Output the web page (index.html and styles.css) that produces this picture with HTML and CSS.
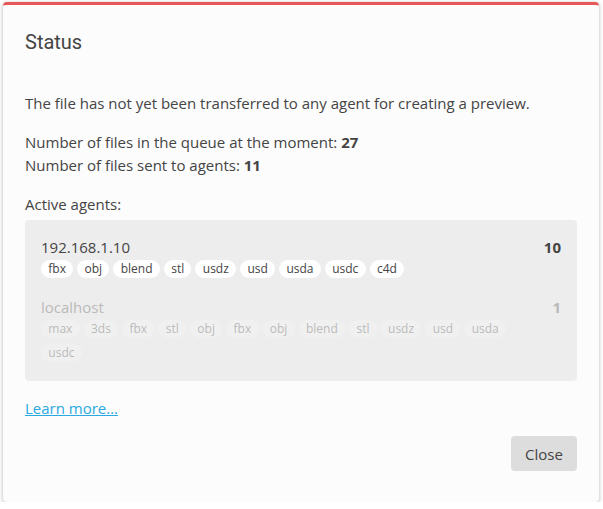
FILE: index.html
```html
<!DOCTYPE html>
<html>
<head>
<meta charset="utf-8">
<link rel="stylesheet" href="styles.css">
</head>
<body>
<div class="dialog">
  <h2 class="title">Status</h2>
  <div class="content">
    <p class="para">The file has not yet been transferred to any agent for creating a preview.</p>
    <p class="para">Number of files in the queue at the moment: <b>27</b><br>Number of files sent to agents: <b>11</b></p>
    <p class="para label">Active agents:</p>
    <div class="agents">
      <div class="agent">
        <div class="agent-main">
          <div class="agent-name">192.168.1.10</div>
          <div class="chips">
            <span class="chip">fbx</span><span class="chip">obj</span><span class="chip">blend</span><span class="chip">stl</span><span class="chip">usdz</span><span class="chip">usd</span><span class="chip">usda</span><span class="chip">usdc</span><span class="chip">c4d</span>
          </div>
        </div>
        <b class="agent-count">10</b>
      </div>
      <div class="agent inactive">
        <div class="agent-main">
          <div class="agent-name">localhost</div>
          <div class="chips">
            <span class="chip">max</span><span class="chip">3ds</span><span class="chip">fbx</span><span class="chip">stl</span><span class="chip">obj</span><span class="chip">fbx</span><span class="chip">obj</span><span class="chip">blend</span><span class="chip">stl</span><span class="chip">usdz</span><span class="chip">usd</span><span class="chip">usda</span><span class="chip">usdc</span>
          </div>
        </div>
        <b class="agent-count">1</b>
      </div>
    </div>
    <p class="learn"><a href="#" class="link">Learn more…</a></p>
  </div>
  <div class="actions"><button class="btn">Close</button></div>
</div>
</body>
</html>
```
FILE: styles.css
```css
html, body { margin: 0; padding: 0; background: #fff; }
body { padding: 2px 4px 0 3px; font-family: "Open Sans", sans-serif; color: #444; }
.dialog {
  width: 596px;
  box-sizing: border-box;
  background: #fcfcfc;
  border-top: 3px solid #e65757;
  border-radius: 4px;
  box-shadow: 0 1px 4px rgba(0,0,0,0.3);
  padding-bottom: 31px;
  display: flex;
  flex-direction: column;
}
.title {
  margin: 0;
  padding: 23px 22px 0 22px;
  font-family: Roboto, "Liberation Sans", sans-serif;
  font-weight: 400;
  font-size: 20px;
  line-height: 28px;
  color: #444;
}
.content { padding: 36px 22px 0 22px; font-size: 15px; line-height: 23px; }
.para { margin: 0 0 16px 0; }
.para.label { margin-bottom: 4px; }
.agents {
  background: #ededed;
  border-radius: 4px;
  padding: 16px 16px 19px 16px;
  display: flex;
  flex-direction: column;
  gap: 18px;
}
.agent { display: flex; gap: 16px; align-items: flex-start; }
.agent-main { flex: 1; min-width: 0; }
.agent-name { font-size: 15px; line-height: 22px; color: #444; }
.agent-count { font-weight: 700; font-size: 15px; line-height: 22px; }
.chips { display: flex; flex-wrap: wrap; gap: 6px 4px; margin-top: 2px; }
.chip {
  background: #fff;
  border-radius: 9px;
  font-size: 12px;
  line-height: 18px;
  padding: 0 7.3px;
  color: #444;
}
.inactive { opacity: 0.3; }
.inactive .chip { background: #fafafa; }
.learn { margin: 16px 0 0 0; }
.link { color: #29a9e1; text-decoration: underline; }
.actions { display: flex; justify-content: flex-end; padding: 16px 22px 0 22px; }
.btn {
  font-family: "Open Sans", sans-serif;
  font-size: 15px;
  color: #444;
  background: #dddddd;
  border: none;
  border-radius: 4px;
  width: 66px;
  height: 35px;
  padding: 0;
}
```
